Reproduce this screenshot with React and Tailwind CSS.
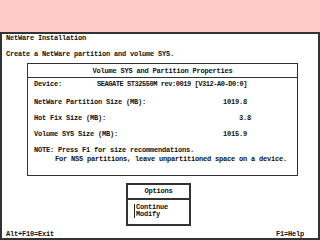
export default function App() {
  const mono = { fontFamily: '"Liberation Mono", "DejaVu Sans Mono", monospace' };

  return (
    <div className="w-[320px] h-[240px] bg-white overflow-hidden text-[#111]" style={mono}>
      <div className="h-[32px] bg-[#ffcaca]" />
      <div className="h-[208px] border-2 border-t-2 border-[#333] bg-white pl-[4px] pr-[14px] flex flex-col text-[7px] font-bold leading-[8px] tracking-[-0.2px]">
        <div className="h-[8px] mt-[0px]">NetWare Installation</div>
        <div className="h-[8px] mt-[8px]">Create a NetWare partition and volume SYS.</div>

        <div className="ml-[21px] mt-[5px] w-[271px] h-[113px] border border-[#333] flex flex-col">
          <div className="h-[14px] flex items-center justify-center border-b border-[#333]">
            Volume SYS and Partition Properties
          </div>
          <div className="pl-[6px] flex flex-col">
            <div className="h-[8px] mt-[2px] flex">
              <span className="w-[63px]">Device:</span>
              <span className="tracking-[-0.45px]">SEAGATE ST32550M rev:0019 [V312-A0-D0:0]</span>
            </div>
            <div className="h-[8px] mt-[10px] flex">
              <span className="w-[189px]">NetWare Partition Size (MB):</span>
              <span>1019.8</span>
            </div>
            <div className="h-[8px] mt-[8px] flex">
              <span className="w-[189px]">Hot Fix Size (MB):</span>
              <span className="w-[28px] text-right">3.8</span>
            </div>
            <div className="h-[8px] mt-[8px] flex">
              <span className="w-[189px]">Volume SYS Size (MB):</span>
              <span>1015.9</span>
            </div>
            <div className="h-[8px] mt-[8px]">NOTE: Press F1 for size recommendations.</div>
            <div className="h-[8px] mt-[1px] pl-[21px]">For NSS partitions, leave unpartitioned space on a device.</div>
          </div>
        </div>

        <div className="ml-[120px] mt-[7px] w-[65px] h-[43px] border-2 border-[#333] flex flex-col">
          <div className="h-[15px] pt-[2px] text-center border-b-2 border-[#333]">Options</div>
          <div className="mt-[4px] ml-[6px] border-l border-[#222] pl-[1px] leading-[7px]">
            <div>Continue</div>
            <div>Modify</div>
          </div>
        </div>

        <div className="mt-[4px] h-[8px] flex justify-between">
          <span>Alt+F10=Exit</span>
          <span>F1=Help</span>
        </div>
      </div>
    </div>
  );
}
